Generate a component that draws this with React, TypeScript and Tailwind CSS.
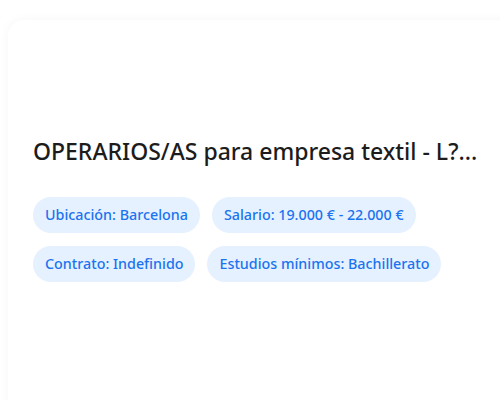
export default function App() {
  const chips1 = ["Ubicación: Barcelona", "Salario: 19.000 € - 22.000 €"];
  const chips2 = ["Contrato: Indefinido", "Estudios mínimos: Bachillerato"];
  const chip =
    "rounded-full bg-[#e5f1ff] text-[#1a73f0] text-[14.3px] leading-[20px] font-medium px-3 py-2 whitespace-nowrap";
  return (
    <div
      className="w-[500px] h-[400px] overflow-hidden bg-white pl-2 pt-5"
      style={{ fontFamily: '"Noto Sans", "Open Sans", sans-serif' }}
    >
      <div className="w-[540px] h-[420px] bg-white rounded-2xl shadow-[0_0_12px_rgba(0,0,0,0.04)] px-[25px] pt-[116px]">
        <h1 className="text-[23px] leading-[30px] font-medium text-[#1c1c1c] whitespace-nowrap">
          OPERARIOS/AS para empresa textil - L?...
        </h1>
        <div className="mt-[31px] flex flex-col gap-[13px]">
          <div className="flex gap-3">
            {chips1.map((c) => (
              <span key={c} className={chip}>
                {c}
              </span>
            ))}
          </div>
          <div className="flex gap-3">
            {chips2.map((c) => (
              <span key={c} className={chip}>
                {c}
              </span>
            ))}
          </div>
        </div>
      </div>
    </div>
  );
}
